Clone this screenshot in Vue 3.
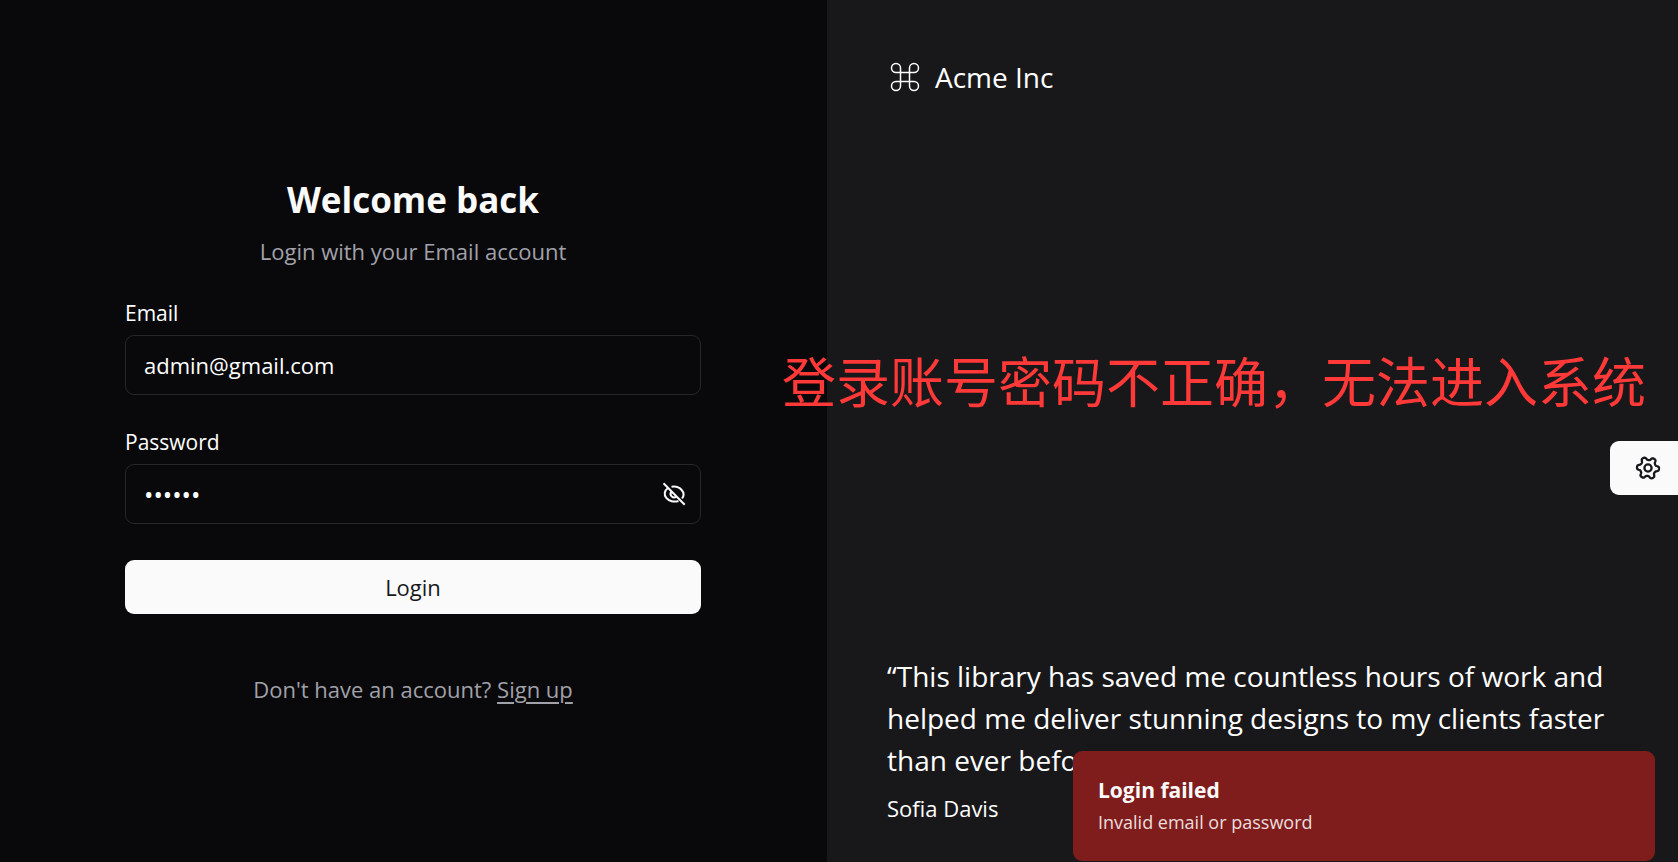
<script setup>
import { ref } from 'vue'

const email = ref('admin@gmail.com')
const password = ref('secret')
const visible = ref(false)

// Outline of a six-toothed gear, centred on 0,0 and turned by a few degrees.
const gear = Array.from({ length: 120 }, (_, i) => {
  const angle = (i / 120) * Math.PI * 2
  const radius = 9.5 + 1.6 * Math.tanh(1.8 * Math.cos(6 * angle))
  const turned = angle + 0.08
  return `${(radius * Math.cos(turned)).toFixed(2)},${(radius * Math.sin(turned)).toFixed(2)}`
}).join(' ')
</script>

<template>
  <div class="page">
    <main class="login">
      <form class="form" @submit.prevent>
        <header class="intro">
          <h1>Welcome back</h1>
          <p>Login with your Email account</p>
        </header>

        <div class="field">
          <label for="email">Email</label>
          <input id="email" v-model="email" type="email" autocomplete="off" />
        </div>

        <div class="field">
          <label for="password">Password</label>
          <div class="control">
            <input id="password" v-model="password" :type="visible ? 'text' : 'password'" autocomplete="off" />
            <button class="toggle" type="button" aria-label="Toggle password" @click="visible = !visible">
              <svg viewBox="0 0 24 24" width="24" height="24" fill="none" stroke="currentColor" stroke-width="2">
                <path d="M9.500 4.800A10 7.800 0 0 1 20 16.500" />
                <path d="M6 6A10 7.800 0 0 0 16.500 19" />
                <path d="M9.500 9.700A3.400 3.400 0 0 0 14.300 14.500" />
                <path d="M1.500 1.300 22.700 22.700" />
              </svg>
            </button>
          </div>
        </div>

        <button class="submit" type="submit">Login</button>

        <p class="signup">Don't have an account? <a href="#signup">Sign up</a></p>
      </form>
    </main>

    <aside class="showcase">
      <div class="brand">
        <svg viewBox="0 0 24 24" width="36" height="36" fill="none" stroke="currentColor" stroke-width="1">
          <path d="M15 6v12a3 3 0 1 0 3-3H6a3 3 0 1 0 3 3V6a3 3 0 1 0-3 3h12a3 3 0 1 0-3-3" />
        </svg>
        <span>Acme Inc</span>
      </div>

      <blockquote class="quote">
        <p>“This library has saved me countless hours of work and helped me deliver stunning designs to my clients faster than ever before.”</p>
        <footer>Sofia Davis</footer>
      </blockquote>
    </aside>

    <p class="note">登录账号密码不正确，无法进入系统</p>

    <button class="settings" type="button" aria-label="Settings">
      <svg viewBox="-14 -14 28 28" width="28" height="28" fill="none" stroke="currentColor" stroke-width="2.3" stroke-linejoin="round">
        <circle r="3.600" />
        <polygon :points="gear" />
      </svg>
    </button>

    <div class="toast" role="alert">
      <strong>Login failed</strong>
      <p>Invalid email or password</p>
    </div>
  </div>
</template>

<style>
body {
  margin: 0;
  background: #09090b;
}
</style>

<style scoped>
.page {
  position: relative;
  display: grid;
  grid-template-columns: 827fr 851fr;
  min-height: 100vh;
  overflow: hidden;
  color: #fafafa;
  background: #09090b;
  font-family: "Segoe UI", "Open Sans", "Noto Sans", sans-serif;
  font-size: 22px;
  line-height: 30px;
}

h1,
p,
blockquote {
  margin: 0;
}

button,
input {
  box-sizing: border-box;
  margin: 0;
  font: inherit;
}

.login {
  display: flex;
  align-items: center;
  justify-content: center;
  padding: 42px 25px 24px 24px;
}

.form {
  display: flex;
  flex-direction: column;
  width: 100%;
  max-width: 576px;
}

.intro {
  margin-bottom: 32px;
  text-align: center;
}

h1 {
  margin-bottom: 12px;
  font-size: 35px;
  font-weight: 700;
  line-height: 48px;
}

.intro p,
.signup {
  color: #a1a1aa;
}

.field {
  display: flex;
  flex-direction: column;
  gap: 7px;
  margin-bottom: 32px;
}

.field label {
  color: #fff;
  font-size: 21px;
}

.field input {
  display: block;
  width: 100%;
  height: 60px;
  padding: 0 18px;
  border: 1px solid #27272a;
  border-radius: 9px;
  outline: none;
  color: #fff;
  background: transparent;
}

.field input[type="password"] {
  font-size: 25px;
}

.control {
  position: relative;
}

.toggle {
  position: absolute;
  top: 0;
  right: 0;
  display: flex;
  align-items: center;
  height: 100%;
  padding: 0 15px;
  border: 0;
  color: #fafafa;
  background: none;
}

.submit {
  height: 54px;
  margin-top: 4px;
  border: 0;
  border-radius: 9px;
  color: #18181b;
  background: #fafafa;
}

.signup {
  margin-top: 60px;
  text-align: center;
}

.signup a {
  color: inherit;
  text-underline-offset: 4px;
}

.showcase {
  display: flex;
  flex-direction: column;
  justify-content: space-between;
  padding: 59px 60px 39px;
  color: #fff;
  background: #18181b;
}

.brand {
  display: flex;
  align-items: center;
  gap: 12px;
  font-size: 28px;
  line-height: 36px;
}

.quote p {
  margin-bottom: 12px;
  font-size: 28px;
  line-height: 42px;
}

.note {
  position: absolute;
  top: 348px;
  right: 32px;
  color: #ff3838;
  font-family: "Noto Sans CJK SC", sans-serif;
  font-size: 54px;
  line-height: 64px;
  white-space: nowrap;
}

.settings {
  position: absolute;
  top: 441px;
  right: 0;
  display: flex;
  align-items: center;
  height: 54px;
  padding: 0 16px 0 24px;
  border: 0;
  border-radius: 9px 0 0 9px;
  color: #18181b;
  background: #fafafa;
}

.toast {
  position: absolute;
  right: 23px;
  bottom: 1px;
  box-sizing: border-box;
  width: 582px;
  padding: 24px 25px;
  border-radius: 9px;
  background: #7f1d1d;
}

.toast strong {
  display: block;
  margin-bottom: 2px;
  font-size: 21px;
}

.toast p {
  color: #eddede;
  font-size: 18px;
}
</style>
